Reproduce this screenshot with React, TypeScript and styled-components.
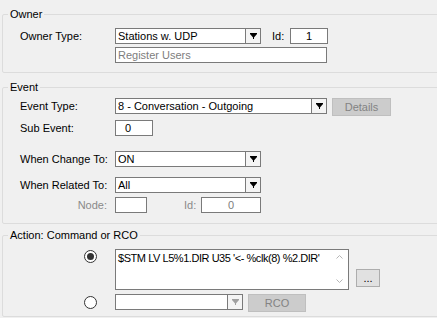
import styled, { createGlobalStyle } from 'styled-components'

const GlobalStyle = createGlobalStyle`
  html, body {
    margin: 0;
    padding: 0;
    background: #f0f0f0;
    overflow: hidden;
  }
  body {
    font-family: 'Liberation Sans', Arial, sans-serif;
    font-size: 11px;
    color: #000;
  }
`

const config = {
  border: '#7a7a7a',
  groupBorder: '#dcdcdc',
  labelWidth: 95,
  rowHeight: 16,
}

const Page = styled.div`
  width: 440px;
  padding: 8px 0 0 2px;
`

type GroupProps = {
  top?: number
}

const Group = styled.fieldset<GroupProps>`
  margin: ${(props) => props.top || 0}px 0 0 0;
  padding: 0;
  border: 1px solid ${config.groupBorder};
  border-radius: 2px;
  min-inline-size: 0;
`

const Caption = styled.legend`
  margin-left: 5px;
  padding: 0 2px;
  line-height: 13px;
  height: 13px;
`

type BodyProps = {
  padTop: number
  padBottom: number
}

const Body = styled.div<BodyProps>`
  padding: ${(props) => props.padTop}px 0 ${(props) => props.padBottom}px 17px;
`

type RowProps = {
  top?: number
}

const Row = styled.div<RowProps>`
  display: flex;
  align-items: flex-start;
  margin-top: ${(props) => props.top || 0}px;
`

type LabelProps = {
  muted?: boolean
  right?: boolean
}

const Label = styled.div<LabelProps>`
  width: ${config.labelWidth}px;
  flex: none;
  height: ${config.rowHeight}px;
  line-height: ${config.rowHeight}px;
  white-space: nowrap;
  color: ${(props) => (props.muted ? '#8a8a8a' : '#000')};
  text-align: ${(props) => (props.right ? 'right' : 'left')};
  padding-right: ${(props) => (props.right ? 8 : 0)}px;
  box-sizing: border-box;
`

type InlineLabelProps = {
  gap: number
  width: number
  muted?: boolean
}

const InlineLabel = styled.div<InlineLabelProps>`
  margin-left: ${(props) => props.gap}px;
  width: ${(props) => props.width}px;
  height: ${config.rowHeight}px;
  line-height: ${config.rowHeight}px;
  color: ${(props) => (props.muted ? '#8a8a8a' : '#000')};
  flex: none;
`

const RadioCell = styled.div<RowProps>`
  width: ${config.labelWidth}px;
  flex: none;
  display: flex;
  justify-content: flex-end;
  padding-right: 18px;
  padding-top: ${(props) => props.top || 0}px;
  box-sizing: border-box;
`

type RadioProps = {
  checked?: boolean
}

const Radio = styled.div<RadioProps>`
  width: 13px;
  height: 13px;
  border-radius: 50%;
  border: 1px solid #333;
  background: #fff;
  box-sizing: border-box;
  display: flex;
  align-items: center;
  justify-content: center;

  &::after {
    content: '';
    display: ${(props) => (props.checked ? 'block' : 'none')};
    width: 7px;
    height: 7px;
    border-radius: 50%;
    background: #333;
  }
`

type BoxProps = {
  width: number
  align?: 'left' | 'center'
  indent?: number
  muted?: boolean
}

const TextBox = styled.div<BoxProps>`
  width: ${(props) => props.width}px;
  height: ${config.rowHeight}px;
  line-height: 14px;
  box-sizing: border-box;
  border: 1px solid ${config.border};
  background: #fff;
  flex: none;
  padding-left: ${(props) => props.indent ?? 2}px;
  text-align: ${(props) => props.align || 'left'};
  color: ${(props) => (props.muted ? '#7d7d7d' : '#000')};
  white-space: nowrap;
  overflow: hidden;
`

const ComboFrame = styled.div<{ width: number }>`
  width: ${(props) => props.width}px;
  height: ${config.rowHeight}px;
  box-sizing: border-box;
  border: 1px solid ${config.border};
  background: #fff;
  display: flex;
  flex: none;
`

const ComboText = styled.div`
  flex: 1;
  padding-left: 2px;
  line-height: 14px;
  white-space: nowrap;
  overflow: hidden;
`

const ComboButton = styled.div`
  width: 14px;
  flex: none;
  border-left: 1px solid ${config.border};
  background: #f4f4f4;
  display: flex;
  align-items: center;
  justify-content: center;
`

type ButtonProps = {
  width: number
  gap: number
  enabled?: boolean
  drop?: number
}

const Button = styled.div<ButtonProps>`
  width: ${(props) => props.width}px;
  height: 18px;
  margin-left: ${(props) => props.gap}px;
  margin-top: ${(props) => props.drop || 0}px;
  box-sizing: border-box;
  flex: none;
  border: 1px solid ${(props) => (props.enabled ? '#adadad' : '#bfbfbf')};
  background: ${(props) => (props.enabled ? '#e1e1e1' : '#cccccc')};
  color: ${(props) => (props.enabled ? '#000' : '#838383')};
  text-align: center;
  line-height: 16px;
`

const Memo = styled.div`
  width: 234px;
  height: 41px;
  box-sizing: border-box;
  border: 1px solid ${config.border};
  background: #fff;
  display: flex;
  flex: none;
`

const MemoText = styled.div`
  flex: 1;
  min-width: 0;
  padding: 2px 0 0 2px;
  line-height: 13px;
  letter-spacing: -0.45px;
  white-space: nowrap;
`

const ScrollArrows = styled.div`
  width: 17px;
  flex: none;
  display: flex;
  flex-direction: column;
  justify-content: space-between;
  align-items: center;
  padding: 5px 0 6px;
`

function Arrow({ disabled }: { disabled?: boolean }) {
  const fill = disabled ? '#a0a0a0' : '#000'
  return (
    <svg width="7" height="6" viewBox="0 0 7 6">
      <rect x="0" y="0" width="7" height="1" fill={fill} />
      <polygon points="0,1 7,1 3.5,5" fill={fill} />
      <rect x="3" y="4" width="1" height="2" fill={fill} />
    </svg>
  )
}

function Chevron({ up }: { up?: boolean }) {
  return (
    <svg width="7" height="4" viewBox="0 0 7 4">
      <polyline
        points={up ? '0.5,3.5 3.5,0.5 6.5,3.5' : '0.5,0.5 3.5,3.5 6.5,0.5'}
        fill="none"
        stroke="#b5b5b5"
        strokeWidth="1"
      />
    </svg>
  )
}

type ComboProps = {
  width: number
  value?: string
  disabled?: boolean
}

function Combo({ width, value, disabled }: ComboProps) {
  return (
    <ComboFrame width={width}>
      <ComboText>{value}</ComboText>
      <ComboButton>
        <Arrow disabled={disabled} />
      </ComboButton>
    </ComboFrame>
  )
}

export default function App() {
  return (
    <Page>
      <GlobalStyle />

      <Group>
        <Caption>Owner</Caption>
        <Body padTop={7} padBottom={9}>
          <Row>
            <Label>Owner Type:</Label>
            <Combo width={146} value="Stations w. UDP" />
            <InlineLabel gap={11} width={18}>Id:</InlineLabel>
            <TextBox width={38} align="center" indent={0}>1</TextBox>
          </Row>
          <Row top={3}>
            <Label />
            <TextBox width={212} muted>Register Users</TextBox>
          </Row>
        </Body>
      </Group>

      <Group top={8}>
        <Caption>Event</Caption>
        <Body padTop={4} padBottom={10}>
          <Row>
            <Label>Event Type:</Label>
            <Combo width={212} value="8 - Conversation - Outgoing" />
            <Button width={59} gap={5}>Details</Button>
          </Row>
          <Row top={4}>
            <Label>Sub Event:</Label>
            <TextBox width={38} indent={9}>0</TextBox>
          </Row>
          <Row top={15}>
            <Label>When Change To:</Label>
            <Combo width={146} value="ON" />
          </Row>
          <Row top={10}>
            <Label>When Related To:</Label>
            <Combo width={146} value="All" />
          </Row>
          <Row top={4}>
            <Label muted right>Node:</Label>
            <TextBox width={32} />
            <InlineLabel gap={37} width={17} muted>Id:</InlineLabel>
            <TextBox width={60} align="center" indent={0} muted>0</TextBox>
          </Row>
        </Body>
      </Group>

      <Group top={5}>
        <Caption>Action: Command or RCO</Caption>
        <Body padTop={7} padBottom={4}>
          <Row>
            <RadioCell top={1}>
              <Radio checked />
            </RadioCell>
            <Memo>
              <MemoText>$STM LV L5%1.DIR U35 '&lt;- %clk(8) %2.DIR'</MemoText>
              <ScrollArrows>
                <Chevron up />
                <Chevron />
              </ScrollArrows>
            </Memo>
            <Button width={24} gap={7} drop={20} enabled>...</Button>
          </Row>
          <Row top={4}>
            <RadioCell top={2}>
              <Radio />
            </RadioCell>
            <Combo width={128} disabled />
            <Button width={58} gap={5}>RCO</Button>
          </Row>
        </Body>
      </Group>
    </Page>
  )
}
